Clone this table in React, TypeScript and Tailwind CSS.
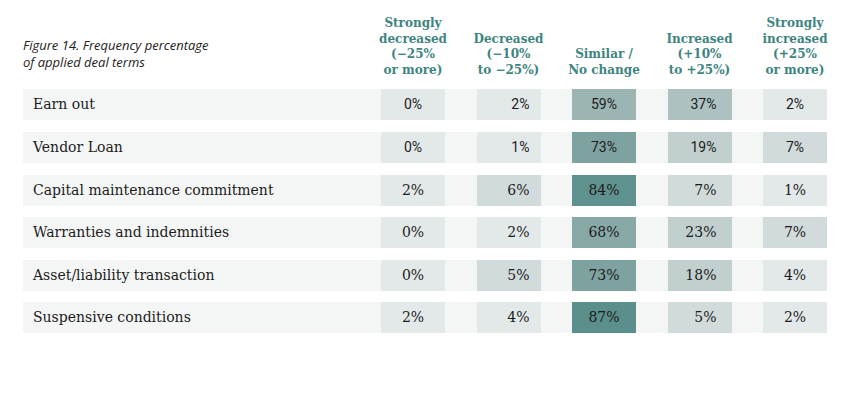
import React from "react";

type Row = {label: string; values: number[]; sans?: boolean};

const rows: Row[] = [
    {label: "Earn out", values: [0, 2, 59, 37, 2], sans: true},
    {label: "Vendor Loan", values: [0, 1, 73, 19, 7], sans: true},
    {label: "Capital maintenance commitment", values: [2, 6, 84, 7, 1]},
    {label: "Warranties and indemnities", values: [0, 2, 68, 23, 7]},
    {label: "Asset/liability transaction", values: [0, 5, 73, 18, 4]},
    {label: "Suspensive conditions", values: [2, 4, 87, 5, 2]},
];

const headers = [
    ["Strongly", "decreased", "(\u221225%", "or more)"],
    ["Decreased", "(\u221210%", "to \u221225%)"],
    ["Similar /", "No change"],
    ["Increased", "(+10%", "to +25%)"],
    ["Strongly", "increased", "(+25%", "or more)"],
];

// shade per value, darker as the share grows
function shade(v: number): string {
    if (v >= 85) return "bg-[#5b8f8b]";
    if (v >= 80) return "bg-[#5f928e]";
    if (v >= 70) return "bg-[#7ea2a0]";
    if (v >= 65) return "bg-[#89a9a7]";
    if (v >= 50) return "bg-[#9bb5b3]";
    if (v >= 30) return "bg-[#adc2c0]";
    if (v >= 15) return "bg-[#c1cfce]";
    if (v >= 5) return "bg-[#d1dbdb]";
    return "bg-[#e3e9e8]";
}

// the 2nd and 4th columns sit right aligned in the source chart
const align = ["justify-center", "justify-end pr-[11px]", "justify-center", "justify-end pr-[15px]", "justify-center"];

const grid = "grid grid-cols-[1fr_repeat(5,64px)] gap-x-[31.5px]";

export default function App() {
    return (
        <div className="w-[850px] h-[402px] bg-white px-[23px] pt-[16px]">
            <div className={grid + " items-end"}>
                <div className="self-end pb-[8px] font-['Open_Sans'] italic text-[13px] leading-[16.5px] text-[#222]">
                    Figure 14. Frequency percentage<br/>of applied deal terms
                </div>
                {headers.map((h, i) => (
                    <div key={i}
                         className="flex flex-col items-center whitespace-nowrap font-['DejaVu_Serif'] font-bold text-[12px] leading-[15.6px] text-[#3e847f] -mx-4">
                        {h.map((line) => <span key={line}>{line}</span>)}
                    </div>
                ))}
            </div>

            <div className="mt-[11px] flex flex-col gap-y-[11.6px]">
                {rows.map((r) => (
                    <div key={r.label} className={grid + " h-[31px] bg-[#f4f6f5]"}>
                        <div className="flex items-center pl-[10px] font-['DejaVu_Serif'] text-[14px] text-[#1c1c1c]">
                            {r.label}
                        </div>
                        {r.values.map((v, i) => (
                            <div key={i}
                                 className={"flex items-center text-[14px] text-[#1c1c1c] " + shade(v) + " " + align[i] + " " + (r.sans ? "font-['Roboto']" : "font-['DejaVu_Serif']")}>
                                {v}%
                            </div>
                        ))}
                    </div>
                ))}
            </div>
        </div>
    )
}
